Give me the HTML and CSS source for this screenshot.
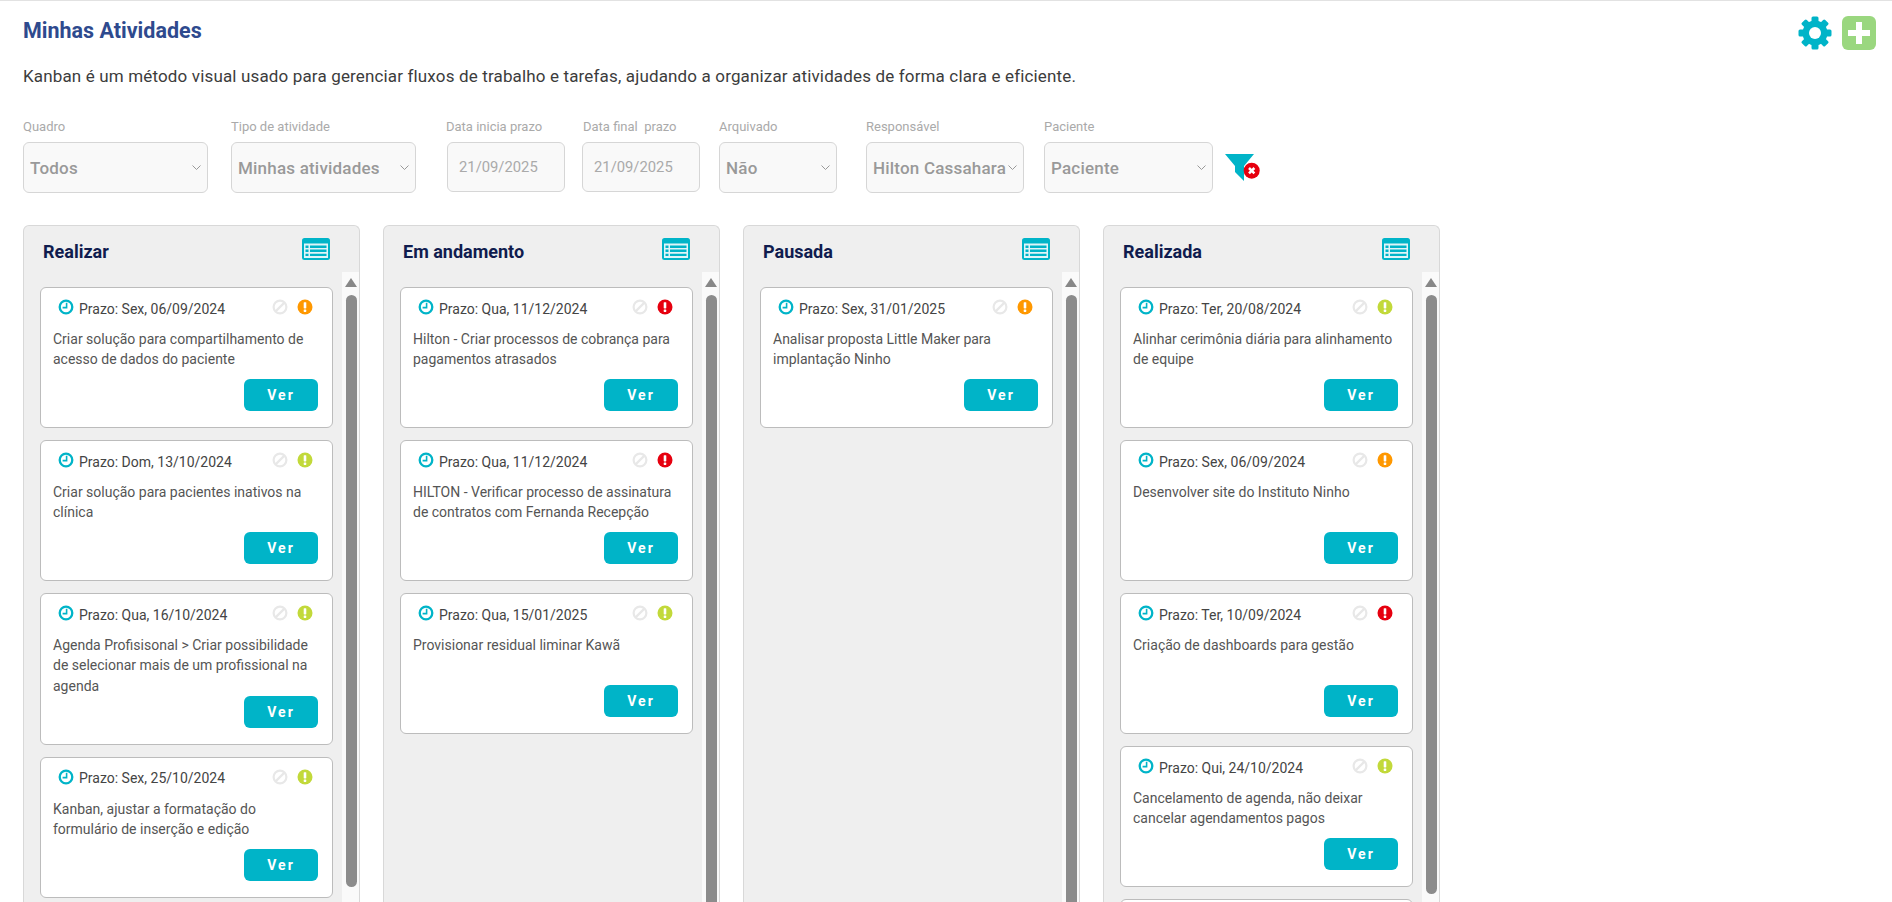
FILE: index.html
```html
<!DOCTYPE html>
<html lang="pt-BR">
<head>
  <meta charset="UTF-8" />
  <meta name="viewport" content="width=device-width, initial-scale=1" />
  <title>Minhas Atividades</title>
  <link rel="stylesheet" href="styles.css">
</head>
<body>

  <!-- icones usados nos cards -->
  <svg class="sprite" aria-hidden="true">
    <symbol id="i-clock" viewBox="0 0 16 16">
      <circle cx="8" cy="8" r="6.3" fill="none" stroke="#00b4c8" stroke-width="2.3"/>
      <path d="M8.6 3.8v4.8H4.6" fill="none" stroke="#00b4c8" stroke-width="1.6"/>
    </symbol>
    <symbol id="i-block" viewBox="0 0 16 16">
      <circle cx="8" cy="8" r="6.4" fill="none" stroke="#e8e8e8" stroke-width="2.2"/>
      <path d="M12.4 3.6 3.6 12.4" stroke="#e8e8e8" stroke-width="2.2"/>
    </symbol>
    <symbol id="i-alert" viewBox="0 0 16 16">
      <circle cx="8" cy="8" r="7.5" fill="currentColor"/>
      <rect x="6.7" y="3.2" width="2.6" height="6.2" rx="0.6" fill="#fff"/>
      <rect x="6.7" y="10.4" width="2.6" height="2.5" rx="0.6" fill="#fff"/>
    </symbol>
    <symbol id="i-list" viewBox="0 0 28 22">
      <rect width="28" height="22" rx="2.5" fill="#00b4c8"/>
      <rect x="2" y="5.5" width="24" height="14.5" fill="#dff5f8"/>
      <path d="M3.5 7.5h3v2.4h-3zM8 7.5h16.5v2.4H8zM3.5 11.6h3V14h-3zM8 11.6h16.5V14H8zM3.5 15.7h3v2.4h-3zM8 15.7h16.5v2.4H8z" fill="#00b4c8"/>
    </symbol>
  </svg>

  <header class="top">
    <h1 class="title">Minhas Atividades</h1>
    <div class="top-actions">
      <svg class="gear" viewBox="0 0 34 34" aria-hidden="true">
        <g fill="#00b4c8">
          <rect x="13.5" y="0.5" width="7" height="33" rx="1.5"/>
          <rect x="13.5" y="0.5" width="7" height="33" rx="1.5" transform="rotate(45 17 17)"/>
          <rect x="13.5" y="0.5" width="7" height="33" rx="1.5" transform="rotate(90 17 17)"/>
          <rect x="13.5" y="0.5" width="7" height="33" rx="1.5" transform="rotate(135 17 17)"/>
          <circle cx="17" cy="17" r="12.5"/>
        </g>
        <circle cx="17" cy="17" r="6" fill="#fff"/>
      </svg>
      <svg class="plus" viewBox="0 0 34 34" aria-hidden="true">
        <rect width="34" height="34" rx="6" fill="#9ad77f"/>
        <path d="M14 6h6v8h8v6h-8v8h-6v-8H6v-6h8z" fill="#fff"/>
      </svg>
    </div>
  </header>

  <p class="intro">Kanban é um método visual usado para gerenciar fluxos de trabalho e tarefas, ajudando a organizar atividades de forma clara e eficiente.</p>

  <form class="filters">
    <div class="field f-quadro">
      <label>Quadro</label>
      <select disabled><option>Todos</option></select>
    </div>
    <div class="field f-tipo">
      <label>Tipo de atividade</label>
      <select disabled><option>Minhas atividades</option></select>
    </div>
    <div class="field f-data-ini">
      <label>Data inicia prazo</label>
      <input type="text" value="21/09/2025" disabled />
    </div>
    <div class="field f-data-fim">
      <label>Data final&nbsp; prazo</label>
      <input type="text" value="21/09/2025" disabled />
    </div>
    <div class="field f-arquivado">
      <label>Arquivado</label>
      <select disabled><option>Não</option></select>
    </div>
    <div class="field f-resp">
      <label>Responsável</label>
      <select disabled><option>Hilton Cassahara</option></select>
    </div>
    <div class="field f-paciente">
      <label>Paciente</label>
      <select disabled><option>Paciente</option></select>
    </div>
    <svg class="clear-filter" viewBox="0 0 36 27" aria-hidden="true">
      <path d="M0 0h29L19 12v15l-9-9v-6z" fill="#00b4c8"/>
      <circle cx="26.7" cy="16.7" r="8" fill="#e6000f"/>
      <path d="M24 14l5.4 5.4M29.4 14L24 19.4" stroke="#fff" stroke-width="2.5"/>
    </svg>
  </form>

  <main class="board">

    <section class="column">
      <div class="column-head">
        <h2>Realizar</h2>
        <svg class="list-icon"><use href="#i-list"/></svg>
      </div>
      <div class="column-body">
        <div class="cards">
          <article class="card">
            <div class="card-head">
              <svg class="ico"><use href="#i-clock"/></svg><span class="due">Prazo: Sex, 06/09/2024</span>
              <svg class="ico block"><use href="#i-block"/></svg><svg class="ico orange"><use href="#i-alert"/></svg>
            </div>
            <p class="desc">Criar solução para compartilhamento de acesso de dados do paciente</p>
            <button type="button" class="ver">Ver</button>
          </article>
          <article class="card">
            <div class="card-head">
              <svg class="ico"><use href="#i-clock"/></svg><span class="due">Prazo: Dom, 13/10/2024</span>
              <svg class="ico block"><use href="#i-block"/></svg><svg class="ico green"><use href="#i-alert"/></svg>
            </div>
            <p class="desc">Criar solução para pacientes inativos na clínica</p>
            <button type="button" class="ver">Ver</button>
          </article>
          <article class="card">
            <div class="card-head">
              <svg class="ico"><use href="#i-clock"/></svg><span class="due">Prazo: Qua, 16/10/2024</span>
              <svg class="ico block"><use href="#i-block"/></svg><svg class="ico green"><use href="#i-alert"/></svg>
            </div>
            <p class="desc">Agenda Profisisonal &gt; Criar possibilidade de selecionar mais de um profissional na agenda</p>
            <button type="button" class="ver">Ver</button>
          </article>
          <article class="card">
            <div class="card-head">
              <svg class="ico"><use href="#i-clock"/></svg><span class="due">Prazo: Sex, 25/10/2024</span>
              <svg class="ico block"><use href="#i-block"/></svg><svg class="ico green"><use href="#i-alert"/></svg>
            </div>
            <p class="desc">Kanban, ajustar a formatação do formulário de inserção e edição</p>
            <button type="button" class="ver">Ver</button>
          </article>
        </div>
        <div class="rail"><span class="rail-up"></span><span class="thumb thumb-a"></span></div>
      </div>
    </section>

    <section class="column">
      <div class="column-head">
        <h2>Em andamento</h2>
        <svg class="list-icon"><use href="#i-list"/></svg>
      </div>
      <div class="column-body">
        <div class="cards">
          <article class="card">
            <div class="card-head">
              <svg class="ico"><use href="#i-clock"/></svg><span class="due">Prazo: Qua, 11/12/2024</span>
              <svg class="ico block"><use href="#i-block"/></svg><svg class="ico red"><use href="#i-alert"/></svg>
            </div>
            <p class="desc">Hilton - Criar processos de cobrança para pagamentos atrasados</p>
            <button type="button" class="ver">Ver</button>
          </article>
          <article class="card">
            <div class="card-head">
              <svg class="ico"><use href="#i-clock"/></svg><span class="due">Prazo: Qua, 11/12/2024</span>
              <svg class="ico block"><use href="#i-block"/></svg><svg class="ico red"><use href="#i-alert"/></svg>
            </div>
            <p class="desc">HILTON - Verificar processo de assinatura de contratos com Fernanda Recepção</p>
            <button type="button" class="ver">Ver</button>
          </article>
          <article class="card">
            <div class="card-head">
              <svg class="ico"><use href="#i-clock"/></svg><span class="due">Prazo: Qua, 15/01/2025</span>
              <svg class="ico block"><use href="#i-block"/></svg><svg class="ico green"><use href="#i-alert"/></svg>
            </div>
            <p class="desc">Provisionar residual liminar Kawã</p>
            <button type="button" class="ver">Ver</button>
          </article>
        </div>
        <div class="rail"><span class="rail-up"></span><span class="thumb thumb-full"></span></div>
      </div>
    </section>

    <section class="column">
      <div class="column-head">
        <h2>Pausada</h2>
        <svg class="list-icon"><use href="#i-list"/></svg>
      </div>
      <div class="column-body">
        <div class="cards">
          <article class="card">
            <div class="card-head">
              <svg class="ico"><use href="#i-clock"/></svg><span class="due">Prazo: Sex, 31/01/2025</span>
              <svg class="ico block"><use href="#i-block"/></svg><svg class="ico orange"><use href="#i-alert"/></svg>
            </div>
            <p class="desc">Analisar proposta Little Maker para implantação Ninho</p>
            <button type="button" class="ver">Ver</button>
          </article>
        </div>
        <div class="rail"><span class="rail-up"></span><span class="thumb thumb-full"></span></div>
      </div>
    </section>

    <section class="column">
      <div class="column-head">
        <h2>Realizada</h2>
        <svg class="list-icon"><use href="#i-list"/></svg>
      </div>
      <div class="column-body">
        <div class="cards">
          <article class="card">
            <div class="card-head">
              <svg class="ico"><use href="#i-clock"/></svg><span class="due">Prazo: Ter, 20/08/2024</span>
              <svg class="ico block"><use href="#i-block"/></svg><svg class="ico green"><use href="#i-alert"/></svg>
            </div>
            <p class="desc">Alinhar cerimônia diária para alinhamento de equipe</p>
            <button type="button" class="ver">Ver</button>
          </article>
          <article class="card">
            <div class="card-head">
              <svg class="ico"><use href="#i-clock"/></svg><span class="due">Prazo: Sex, 06/09/2024</span>
              <svg class="ico block"><use href="#i-block"/></svg><svg class="ico orange"><use href="#i-alert"/></svg>
            </div>
            <p class="desc">Desenvolver site do Instituto Ninho</p>
            <button type="button" class="ver">Ver</button>
          </article>
          <article class="card">
            <div class="card-head">
              <svg class="ico"><use href="#i-clock"/></svg><span class="due">Prazo: Ter, 10/09/2024</span>
              <svg class="ico block"><use href="#i-block"/></svg><svg class="ico red"><use href="#i-alert"/></svg>
            </div>
            <p class="desc">Criação de dashboards para gestão</p>
            <button type="button" class="ver">Ver</button>
          </article>
          <article class="card">
            <div class="card-head">
              <svg class="ico"><use href="#i-clock"/></svg><span class="due">Prazo: Qui, 24/10/2024</span>
              <svg class="ico block"><use href="#i-block"/></svg><svg class="ico green"><use href="#i-alert"/></svg>
            </div>
            <p class="desc">Cancelamento de agenda, não deixar cancelar agendamentos pagos</p>
            <button type="button" class="ver">Ver</button>
          </article>
          <article class="card card-empty"></article>
        </div>
        <div class="rail"><span class="rail-up"></span><span class="thumb thumb-b"></span></div>
      </div>
    </section>

  </main>

</body>
</html>
```

FILE: styles.css
```css
html, body {
  height: 100%;
}
body {
  margin: 0;
  border-top: 1px solid #e2e2e2;
  box-sizing: border-box;
  display: flex;
  flex-direction: column;
  overflow: hidden;
  background: #fff;
  font-family: Roboto, "Liberation Sans", sans-serif;
  color: #444;
}
.sprite {
  display: none;
}

/* topo */
.top {
  display: flex;
  justify-content: space-between;
  padding: 15px 16px 0 23px;
  height: 34px;
}
.title {
  margin: 0;
  font-size: 21.5px;
  line-height: 30px;
  font-weight: 700;
  color: #2e4a8e;
}
.top-actions {
  display: flex;
  gap: 10px;
}
.gear, .plus {
  width: 34px;
  height: 34px;
}
.intro {
  margin: 14px 0 0 23px;
  font-size: 17px;
  letter-spacing: 0.15px;
  line-height: 24px;
  color: #3c3c3c;
}

/* filtros */
.filters {
  display: flex;
  align-items: flex-end;
  margin: 30px 0 0 23px;
}
.field {
  display: flex;
  flex-direction: column;
}
.field label {
  font-size: 13px;
  line-height: 18px;
  color: #aaa;
  margin-bottom: 6px;
}
.field select, .field input {
  box-sizing: border-box;
  width: 100%;
  height: 51px;
  padding: 0 6px;
  border: 1px solid #d6d6d6;
  border-radius: 6px;
  background-color: #f9f9f9;
  font-family: inherit;
  font-size: 17px;
  letter-spacing: 0.2px;
  font-weight: 500;
  color: #999;
  opacity: 1;
}
.field select {
  appearance: none;
  background-image: url("data:image/svg+xml,%3Csvg xmlns='http://www.w3.org/2000/svg' width='9' height='5'%3E%3Cpath d='M.5.5l4 4 4-4' fill='none' stroke='%23999' stroke-width='1'/%3E%3C/svg%3E");
  background-repeat: no-repeat;
  background-position: right 6px center;
}
.field input {
  height: 50px;
  margin-bottom: 1px;
  padding-left: 11px;
  font-size: 14.8px;
  letter-spacing: 0;
  font-weight: 400;
  color: #aaa;
}
.f-quadro { width: 185px; margin-right: 23px; }
.f-tipo { width: 185px; margin-right: 31px; }
.f-data-ini { width: 118px; margin-right: 17px; }
.f-data-ini label { margin-left: -1px; }
.f-data-fim { width: 118px; margin-right: 19px; }
.f-data-fim label { margin-left: 1px; }
.f-arquivado { width: 118px; margin-right: 29px; }
.f-resp { width: 158px; margin-right: 20px; }
.f-paciente { width: 169px; margin-right: 12px; }
.clear-filter {
  width: 36px;
  height: 27px;
  margin-bottom: 12px;
}

/* quadro */
.board {
  flex: 1;
  min-height: 0;
  display: flex;
  gap: 23px;
  margin: 32px 0 0 23px;
}
.column {
  box-sizing: border-box;
  width: 337px;
  display: flex;
  flex-direction: column;
  border: 1px solid #d8d8d8;
  border-bottom: none;
  border-radius: 6px 6px 0 0;
  background: #efefef;
}
.column-head {
  height: 46px;
  display: flex;
  align-items: center;
  justify-content: space-between;
  padding: 0 29px 0 19px;
}
.column-head h2 {
  margin: 0;
  padding-top: 4px;
  font-size: 18px;
  font-weight: 700;
  color: #101c4e;
}
.list-icon {
  width: 28px;
  height: 22px;
}
.column-body {
  flex: 1;
  min-height: 0;
  display: flex;
  justify-content: space-between;
  overflow: hidden;
}
.cards {
  width: 293px;
  margin: 15px 0 0 16px;
  display: flex;
  flex-direction: column;
  gap: 12px;
}

/* barra de rolagem */
.rail {
  width: 17px;
  box-sizing: border-box;
  padding: 6px 2px 0 4px;
  display: flex;
  flex-direction: column;
  background: #fafafa;
}
.rail-up {
  width: 0;
  height: 0;
  margin: 0 0 8px -1px;
  border-left: 6.5px solid transparent;
  border-right: 6.5px solid transparent;
  border-bottom: 9px solid #888;
}
.thumb {
  display: block;
  width: 11px;
  background: #8c8c8c;
  border-radius: 6px;
  flex: none;
}
.thumb-a { height: 592px; }
.thumb-b { height: 599px; }
.thumb-full { height: 900px; }

/* card */
.card {
  flex: none;
  box-sizing: border-box;
  min-height: 141px;
  display: flex;
  flex-direction: column;
  padding: 0 14px 16px 12px;
  border: 1px solid #bcbcbc;
  border-radius: 6px;
  background: #fff;
}
.card-head {
  height: 41px;
  display: flex;
  align-items: center;
  padding: 0 5px 0 5px;
}
.ico {
  flex: none;
  width: 16px;
  height: 16px;
  margin-top: -3px;
}
.due {
  margin-left: 5px;
  font-size: 14px;
  color: #444;
}
.block {
  margin-left: auto;
  margin-right: 9px;
}
.orange { color: #ff9800; }
.red { color: #e6000f; }
.green { color: #c2d93a; }
.desc {
  margin: 0;
  min-height: 49px;
  font-size: 14px;
  line-height: 20.3px;
  color: #555;
}
.ver {
  align-self: flex-end;
  width: 74px;
  height: 32px;
  margin-top: auto;
  border: none;
  border-radius: 6px;
  background: #00b4c8;
  color: #fff;
  font-family: inherit;
  font-size: 14px;
  font-weight: 700;
  letter-spacing: 2px;
  cursor: pointer;
}
```
